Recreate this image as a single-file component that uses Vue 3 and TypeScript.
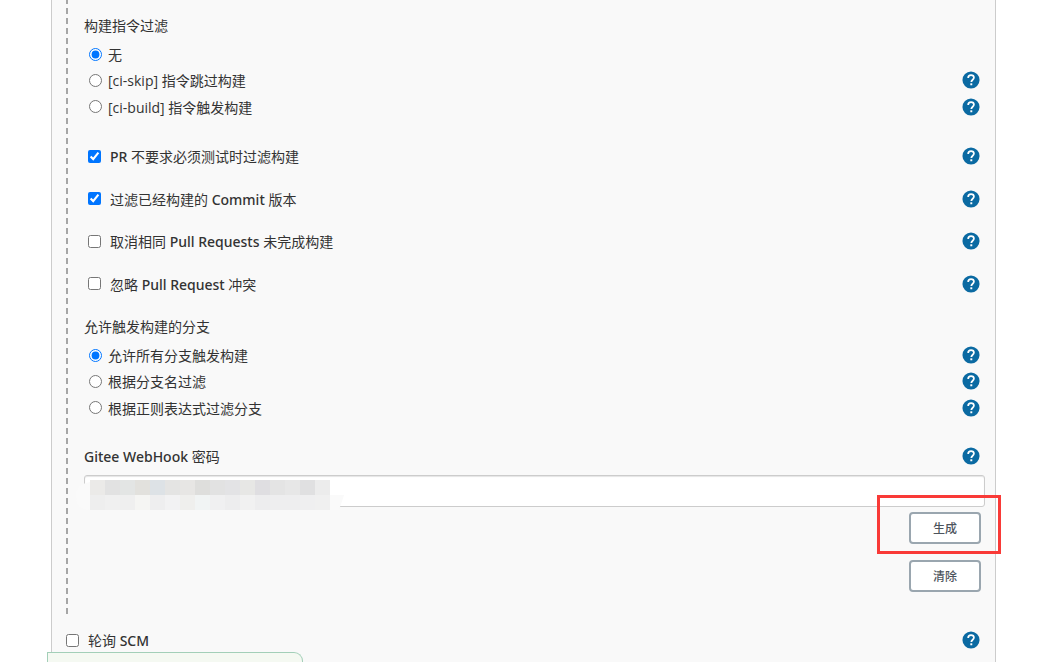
<script setup lang="ts">
import { defineComponent, h, ref } from 'vue'

interface Option {
  value: string
  label: string
  help: boolean
}

const HelpButton = defineComponent({
  props: { topic: { type: String, required: true } },
  setup(props) {
    return () =>
      h('button', { type: 'button', class: 'help-button', 'aria-label': `帮助：${props.topic}` }, [
        h('svg', { viewBox: '0 0 24 24', 'aria-hidden': 'true' }, [
          h('circle', { cx: 12, cy: 12, r: 11.4, fill: '#0b6aa2' }),
          h('path', {
            d: 'M8.2 9.2c0-2.3 1.6-3.8 3.9-3.8 2.2 0 3.8 1.4 3.8 3.4 0 2.8-3.5 3-3.5 6',
            fill: 'none',
            stroke: '#fff',
            'stroke-width': 2.3,
          }),
          h('rect', { x: 11.1, y: 16.4, width: 2.6, height: 2.6, fill: '#fff' }),
        ]),
      ])
  },
})

// Latin words in emphasised labels are set in a medium weight, Chinese stays regular.
const EmphasisText = defineComponent({
  props: { text: { type: String, required: true } },
  setup(props) {
    return () =>
      h(
        'span',
        { class: 'emphasis' },
        props.text
          .split(/([A-Za-z]+(?: [A-Za-z]+)*)/)
          .filter(Boolean)
          .map((part) => (/^[A-Za-z]/.test(part) ? h('b', part) : part)),
      )
  },
})

const commandFilter = ref('none')
const commandOptions: Option[] = [
  { value: 'none', label: '无', help: false },
  { value: 'skip', label: '[ci-skip] 指令跳过构建', help: true },
  { value: 'build', label: '[ci-build] 指令触发构建', help: true },
]

const flags = ref([
  { id: 'pr-test', label: 'PR 不要求必须测试时过滤构建', checked: true },
  { id: 'built-commit', label: '过滤已经构建的 Commit 版本', checked: true },
  { id: 'cancel-pr', label: '取消相同 Pull Requests 未完成构建', checked: false },
  { id: 'ignore-conflict', label: '忽略 Pull Request 冲突', checked: false },
])

const branchFilter = ref('all')
const branchOptions: Option[] = [
  { value: 'all', label: '允许所有分支触发构建', help: true },
  { value: 'name', label: '根据分支名过滤', help: true },
  { value: 'regex', label: '根据正则表达式过滤分支', help: true },
]

const secret = ref('')
const pollScm = ref(false)

const upperTiles = [
  '#ebeae8', '#e2e2e2', '#e3e5e4', '#e2e1dd', '#dde2e6', '#e4e4e3', '#e7e6e4', '#dededc',
  '#e2e2e2', '#e3e3e5', '#e7e7e5', '#dfdee1', '#e4e4e4', '#e7e7e7', '#e0e0e1', '#ececec',
]
const lowerTiles = [
  '#eeeeee', '#f0f0f0', '#efefef', '#f5f5f3', '#eeeeef', '#f2f2f3', '#efefed', '#f1f4f4',
  '#f0f0f1', '#ededee', '#f1f1f1', '#ededee', '#eeeeef', '#eeeeef', '#efeff0', '#f0f0f0',
]
</script>

<template>
  <main class="panel">
    <section class="trigger">
      <fieldset>
        <legend class="heading">构建指令过滤</legend>
        <div class="radios">
          <div v-for="option in commandOptions" :key="option.value" class="row radio-row">
            <label>
              <input v-model="commandFilter" type="radio" name="command" :value="option.value" />
              <span>{{ option.label }}</span>
            </label>
            <HelpButton v-if="option.help" :topic="option.label" />
          </div>
        </div>
      </fieldset>

      <div class="flags">
        <div v-for="flag in flags" :key="flag.id" class="row check-row">
          <label>
            <input v-model="flag.checked" type="checkbox" />
            <EmphasisText :text="flag.label" />
          </label>
          <HelpButton :topic="flag.label" />
        </div>
      </div>

      <fieldset>
        <legend class="heading">允许触发构建的分支</legend>
        <div class="radios">
          <div v-for="option in branchOptions" :key="option.value" class="row radio-row">
            <label>
              <input v-model="branchFilter" type="radio" name="branch" :value="option.value" />
              <span>{{ option.label }}</span>
            </label>
            <HelpButton v-if="option.help" :topic="option.label" />
          </div>
        </div>
      </fieldset>

      <div class="secret">
        <div class="row secret-row">
          <label for="secret"><EmphasisText text="Gitee WebHook 密码" /></label>
          <HelpButton topic="Gitee WebHook 密码" />
        </div>
        <div class="secret-field">
          <input id="secret" v-model="secret" type="text" autocomplete="off" />
          <svg class="mask" width="270" height="32" viewBox="0 0 270 32" aria-hidden="true">
            <path d="M14 2H254V17H268L263 32H14Q0 32 0 18Q0 6 14 4Z" fill="#fafafa" />
            <rect v-for="(fill, i) in upperTiles" :key="'u' + i" :x="14 + i * 15" y="2" width="15" height="15" :fill="fill" />
            <rect v-for="(fill, i) in lowerTiles" :key="'l' + i" :x="14 + i * 15" y="17" width="15" height="15" :fill="fill" />
          </svg>
        </div>
        <div class="actions">
          <div class="marked">
            <button type="button" class="action">生成</button>
          </div>
          <button type="button" class="action">清除</button>
        </div>
      </div>
    </section>

    <div class="row scm-row">
      <label>
        <input v-model="pollScm" type="checkbox" />
        <EmphasisText text="轮询 SCM" />
      </label>
      <HelpButton topic="轮询 SCM" />
    </div>
  </main>
  <div class="status-bubble"></div>
</template>

<style>
body {
  background: #fff;
  overflow: hidden;
}
</style>

<style scoped>
.panel {
  box-sizing: border-box;
  min-height: 100vh;
  margin: 0 43px 0 51px;
  padding-left: 14px;
  border: solid #ccc;
  border-width: 0 1px;
  background: #f9f9f9;
  color: #333;
  font: 14px/20px "Open Sans", "Noto Sans CJK SC", sans-serif;
}

.trigger {
  padding: 11px 0 22px 18px;
  background: repeating-linear-gradient(#a6a6a6 0 4px, transparent 4px 8px, #a6a6a6 8px 10px) left top / 2px 100% no-repeat;
}

fieldset {
  min-width: 0;
  margin: 0;
  padding: 0;
  border: 0;
}

.heading {
  padding: 0;
  line-height: 30px;
}

.row {
  display: flex;
  align-items: center;
  justify-content: space-between;
  padding-right: 15px;
}

.row label {
  display: flex;
  align-items: center;
}

.row label span {
  padding-top: 2px;
}

.row input {
  width: 13px;
  height: 13px;
  margin: 0;
  accent-color: #0075ff;
}

.radios {
  display: grid;
  grid-auto-rows: 1fr;
  height: 79px;
}

.radio-row {
  padding-left: 5px;
}

.radio-row label {
  gap: 6px;
}

.flags {
  display: grid;
  grid-auto-rows: 1fr;
  height: 170px;
  margin: 15px 0 7px;
}

.check-row {
  padding-left: 4px;
}

.check-row label,
.scm-row label {
  gap: 9px;
}

:deep(.emphasis b) {
  font-family: "Noto Sans", sans-serif;
  font-weight: 500;
}

.secret {
  margin-top: 20px;
}

.secret-row {
  height: 30px;
}

.secret-field {
  position: relative;
  margin: 4px 10px 5px 0;
}

.secret-field input {
  display: block;
  box-sizing: border-box;
  width: 100%;
  height: 32px;
  padding: 0 6px;
  border: 1px solid #ccc;
  border-radius: 3px;
  background: #fff;
  box-shadow: inset 0 1px 1px #e5e5e5;
  font: inherit;
}

.mask {
  position: absolute;
  top: 3px;
  left: -8px;
}

.actions {
  display: flex;
  flex-direction: column;
  align-items: flex-end;
  gap: 16px;
  padding-right: 14px;
}

.marked {
  position: relative;
}

.marked::after {
  content: "";
  position: absolute;
  inset: -17px -20px -10px -32px;
  border: 3px solid #f93a37;
  pointer-events: none;
}

.action {
  display: block;
  box-sizing: border-box;
  width: 72px;
  height: 32px;
  padding: 2px 0 0;
  border: 2px solid #9aa6af;
  border-radius: 4px;
  background: #fff;
  color: #4d545d;
  font: 500 12px/20px "Open Sans", "Noto Sans CJK SC", sans-serif;
}

.scm-row {
  height: 30px;
  margin-top: 11px;
}

.status-bubble {
  position: fixed;
  bottom: 0;
  left: 47px;
  box-sizing: border-box;
  width: 256px;
  height: 10px;
  border: 1px solid #a3cfb8;
  border-bottom: 0;
  border-radius: 0 9px 0 0;
  background: #f5f9f2;
}

:deep(.help-button) {
  flex: none;
  width: 18px;
  height: 18px;
  padding: 0;
  border: 0;
  background: none;
}

:deep(.help-button svg) {
  display: block;
  width: 100%;
  height: 100%;
}
</style>
